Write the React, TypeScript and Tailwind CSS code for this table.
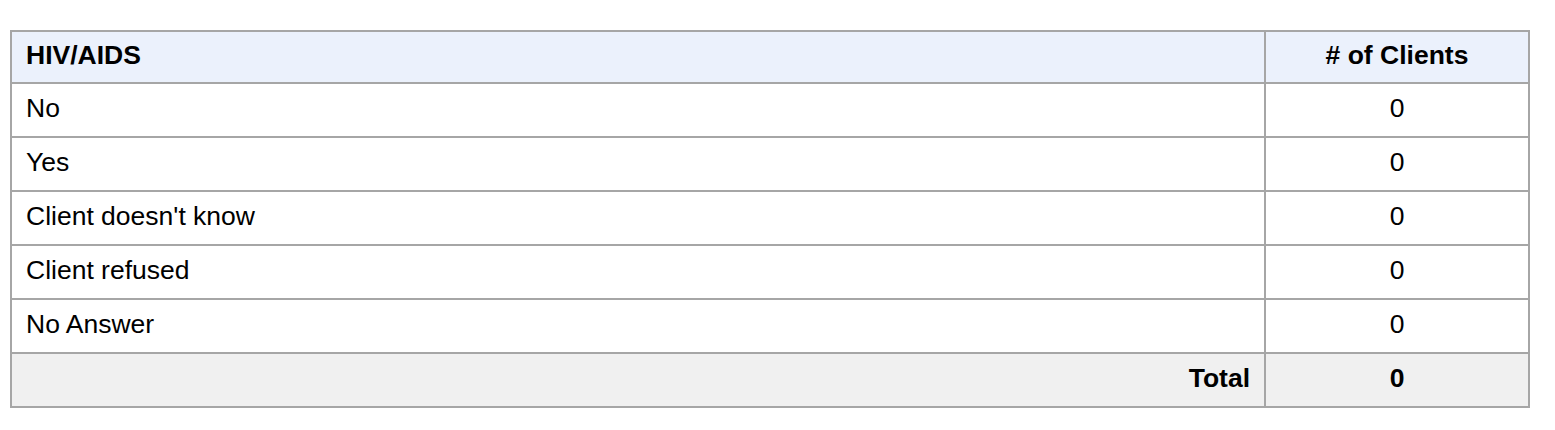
import React from 'react';

interface Row {
    label: string;
    count: number;
}

const rows: Row[] = [
    { label: 'No', count: 0 },
    { label: 'Yes', count: 0 },
    { label: "Client doesn't know", count: 0 },
    { label: 'Client refused', count: 0 },
    { label: 'No Answer', count: 0 },
];

const App: React.FC = () => {
    const total = rows.reduce((sum, r) => sum + r.count, 0);

    return (
        <div className="w-[1555px] h-[430px] bg-white pt-[30px] pl-[10px]" style={{ fontFamily: '"Liberation Sans", Arial, sans-serif' }}>
            <table className="w-[1520px] border-collapse text-[26.5px] leading-none text-black">
                <thead>
                    <tr className="bg-[#ebf1fc] h-[52px]">
                        <th className="border-2 border-[#a6a6a6] px-[14px] pb-[3px] text-left font-bold">HIV/AIDS</th>
                        <th className="border-2 border-[#a6a6a6] px-[14px] pb-[3px] text-center font-bold w-[264px]"># of Clients</th>
                    </tr>
                </thead>
                <tbody>
                    {rows.map((row) => (
                        <tr key={row.label} className="h-[54px]">
                            <td className="border-2 border-[#a6a6a6] px-[14px] pb-[3px] text-left">{row.label}</td>
                            <td className="border-2 border-[#a6a6a6] px-[14px] pb-[3px] text-center">{row.count}</td>
                        </tr>
                    ))}
                    <tr className="bg-[#f0f0f0] h-[54px]">
                        <td className="border-2 border-[#a6a6a6] px-[14px] pb-[3px] text-right font-bold">Total</td>
                        <td className="border-2 border-[#a6a6a6] px-[14px] pb-[3px] text-center font-bold">{total}</td>
                    </tr>
                </tbody>
            </table>
        </div>
    );
};

export default App;
